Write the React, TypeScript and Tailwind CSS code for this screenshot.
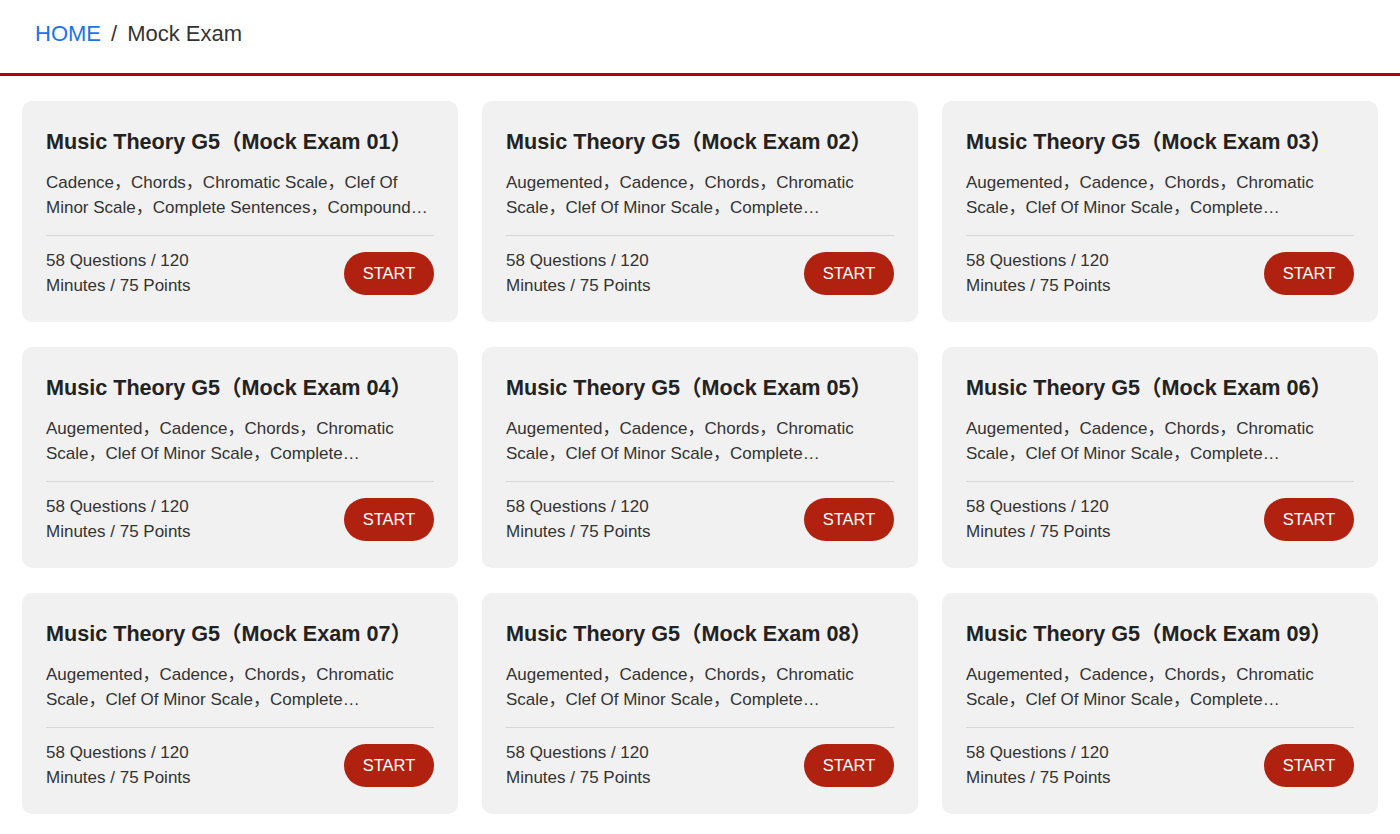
const exams = [
    {
        id: "01",
        topics:
            "Cadence，Chords，Chromatic Scale，Clef Of Minor Scale，Complete Sentences，Compound Time，Intervals",
    },
    ...["02", "03", "04", "05", "06", "07", "08", "09"].map((id) => ({
        id,
        topics:
            "Augemented，Cadence，Chords，Chromatic Scale，Clef Of Minor Scale，Complete Sentences，Compound Time",
    })),
];

function ExamCard({ id, topics }: { id: string; topics: string }) {
    return (
        <div className="bg-[#f1f1f1] rounded-[10px] px-6 pt-[26px] pb-6 flex flex-col">
            <h2 className="text-[21.6px] leading-[30px] font-bold text-[#222] whitespace-nowrap">
                Music Theory G5（Mock Exam {id}）
            </h2>
            <p className="mt-[13px] text-[17px] leading-[25px] text-[#333] line-clamp-2">
                {topics}
            </p>
            <div className="mt-[15px] border-t border-[#d6d6d6]" />
            <div className="mt-3 flex items-center justify-between">
                <p className="w-[180px] text-[17px] leading-[25px] text-[#333]">
                    58 Questions / 120 Minutes / 75 Points
                </p>
                <button className="w-[90px] h-[43px] rounded-full bg-[#b0220f] text-white text-[16.5px]">
                    START
                </button>
            </div>
        </div>
    );
}

export default function App() {
    return (
        <div
            className="min-h-screen bg-white"
            style={{ fontFamily: '"Liberation Sans", "Noto Sans CJK SC", Arial, sans-serif' }}
        >
            <header className="h-[76px] flex items-center px-[35px] pb-[7px] text-[22px] border-b-[3px] border-[#b0000f]">
                <a className="text-[#1a73e8]">HOME</a>
                <span className="mx-[10px] text-[#333]">/</span>
                <span className="text-[#333]">Mock Exam</span>
            </header>
            <main className="grid grid-cols-3 gap-x-6 gap-y-[25px] px-[22px] pt-[25px] pb-6">
                {exams.map((e) => (
                    <ExamCard key={e.id} id={e.id} topics={e.topics} />
                ))}
            </main>
        </div>
    );
}
